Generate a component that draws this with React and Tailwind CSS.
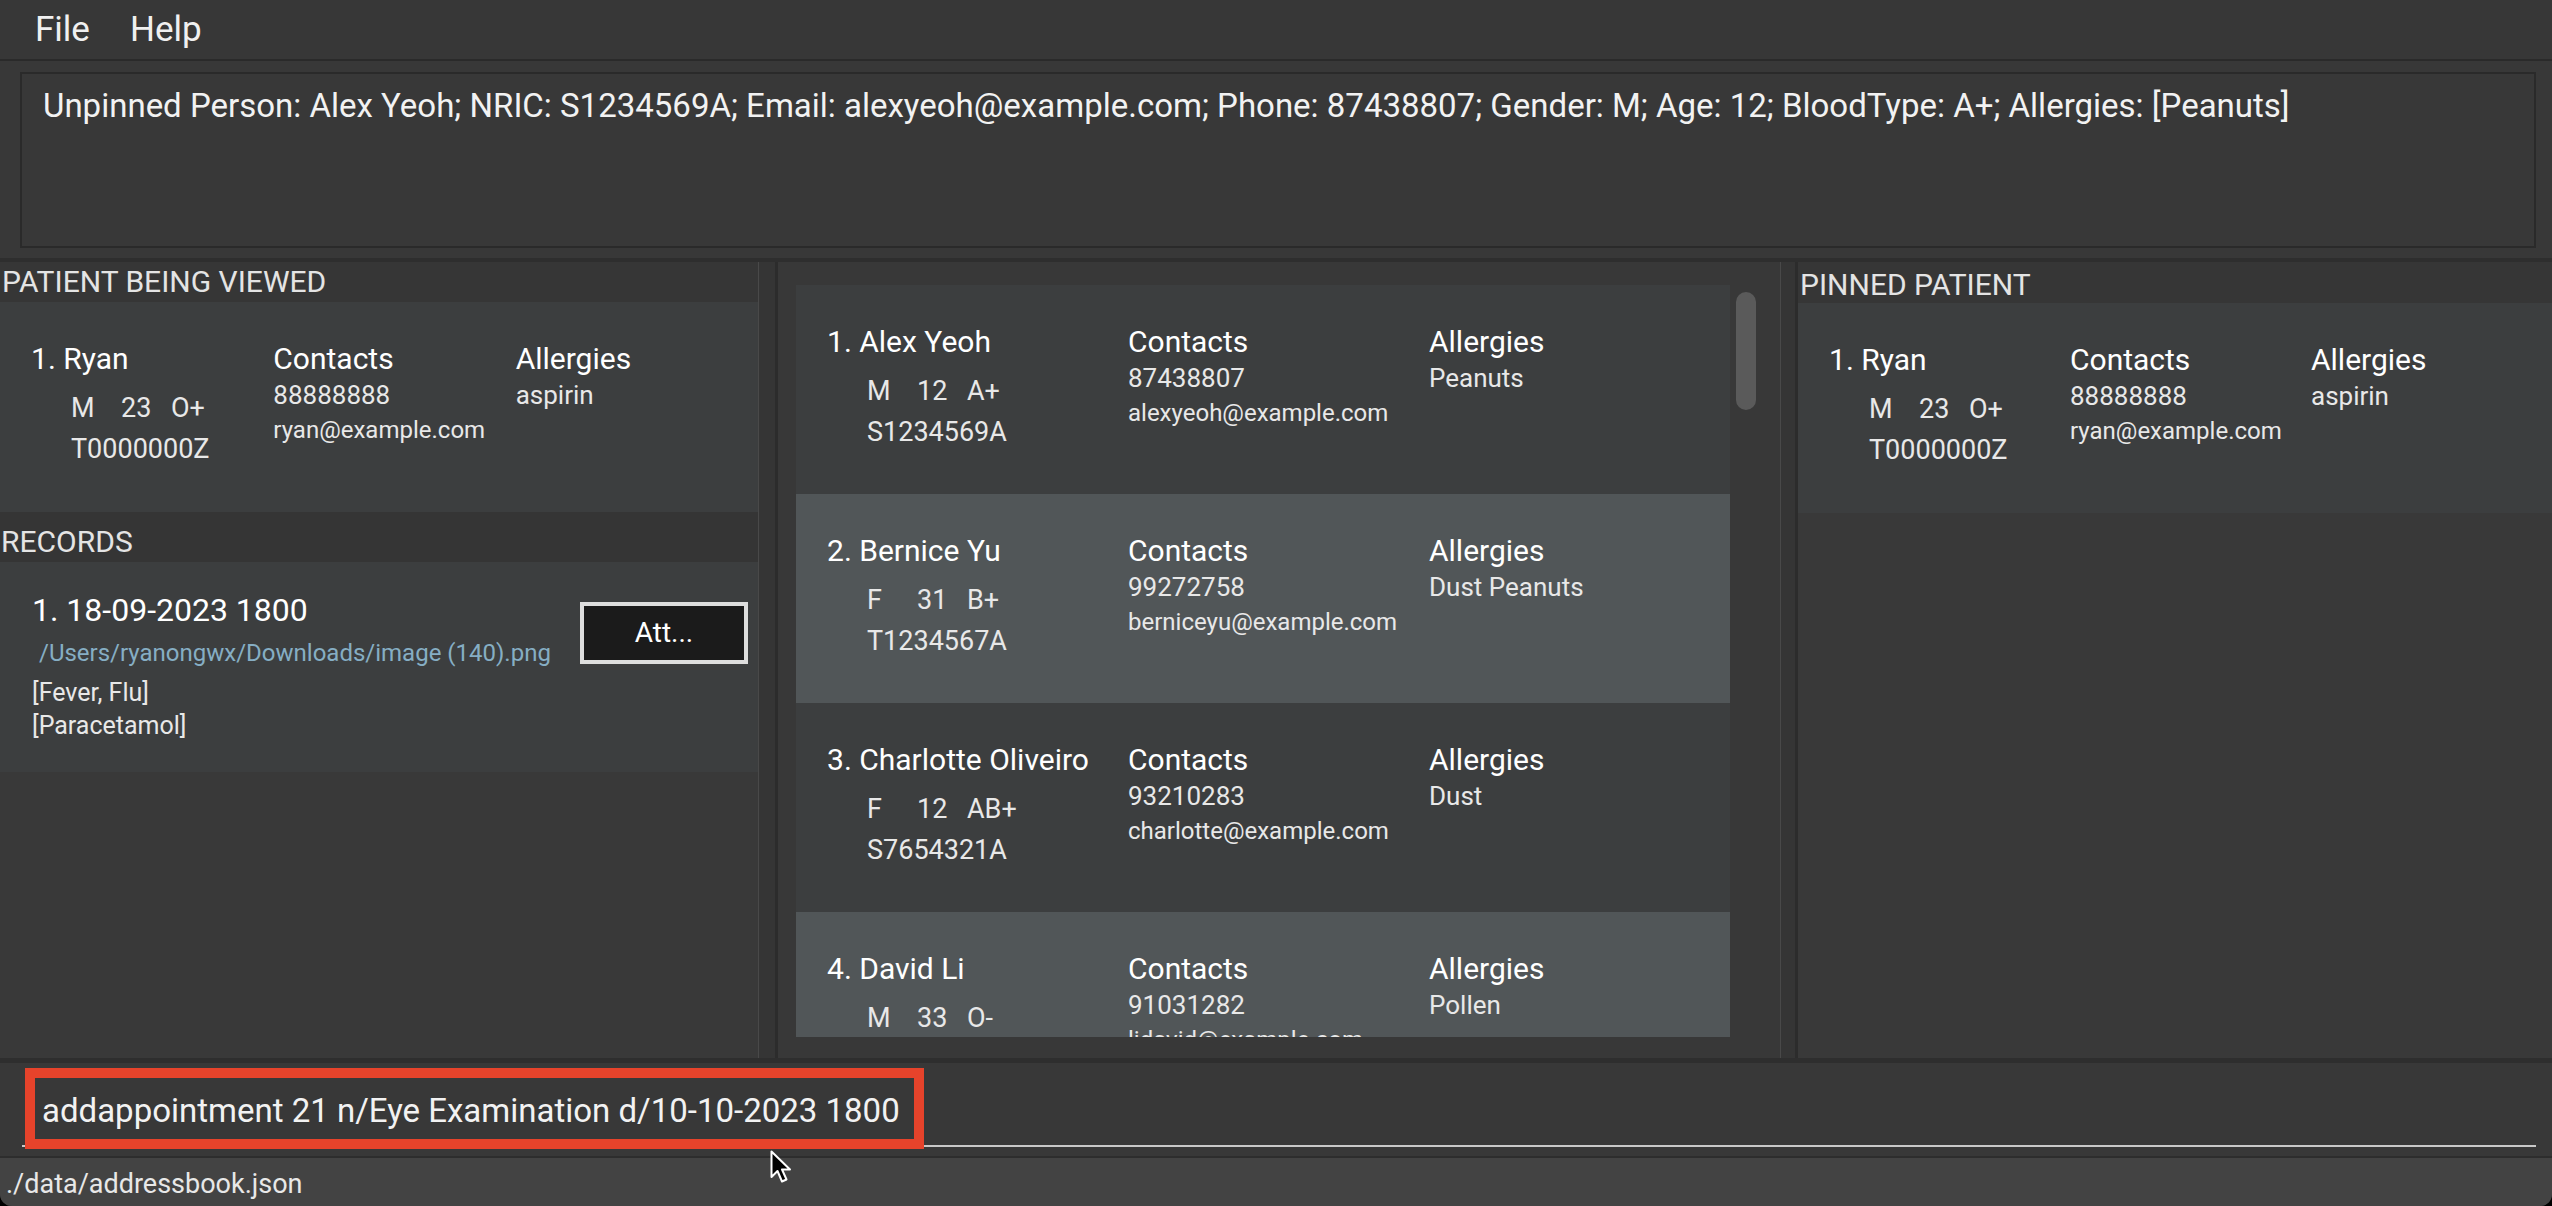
import React from 'react';

// patients shown in the middle list
const people = [
    { idx: 1, name: 'Alex Yeoh', gender: 'M', age: '12', blood: 'A+', nric: 'S1234569A', phone: '87438807', email: 'alexyeoh@example.com', allergies: 'Peanuts' },
    { idx: 2, name: 'Bernice Yu', gender: 'F', age: '31', blood: 'B+', nric: 'T1234567A', phone: '99272758', email: 'berniceyu@example.com', allergies: 'Dust Peanuts' },
    { idx: 3, name: 'Charlotte Oliveiro', gender: 'F', age: '12', blood: 'AB+', nric: 'S7654321A', phone: '93210283', email: 'charlotte@example.com', allergies: 'Dust' },
    { idx: 4, name: 'David Li', gender: 'M', age: '33', blood: 'O-', nric: 'G0000000A', phone: '91031282', email: 'lidavid@example.com', allergies: 'Pollen' },
];

const ryan = { idx: 1, name: 'Ryan', gender: 'M', age: '23', blood: 'O+', nric: 'T0000000Z', phone: '88888888', email: 'ryan@example.com', allergies: 'aspirin' };

const PersonCard = ({ p, className }) => (
    <div className={`grid grid-cols-3 pl-[31px] pt-[37px] shrink-0 ${className}`}>
        <div>
            <div className="text-[30px] leading-[40px] text-white whitespace-nowrap">{p.idx}. {p.name}</div>
            <div className="mt-[9px] pl-[40px] text-[27px] leading-[41px] text-[#e8e8e8]">
                <div className="flex">
                    <span className="w-[50px]">{p.gender}</span>
                    <span className="w-[50px]">{p.age}</span>
                    <span>{p.blood}</span>
                </div>
                <div>{p.nric}</div>
            </div>
        </div>
        <div>
            <div className="text-[30px] leading-[40px] text-white">Contacts</div>
            <div className="text-[26px] leading-[32px] text-[#e8e8e8]">{p.phone}</div>
            <div className="mt-[3px] text-[24px] leading-[32px] text-[#e8e8e8] whitespace-nowrap">{p.email}</div>
        </div>
        <div>
            <div className="text-[30px] leading-[40px] text-white">Allergies</div>
            <div className="text-[26px] leading-[32px] text-[#e8e8e8] whitespace-nowrap">{p.allergies}</div>
        </div>
    </div>
);

const Divider = () => (
    <div className="h-full bg-[#353535] border-l border-[#494949] border-r-[3px] border-r-[#2c2c2c]" />
);

const Cursor = () => (
    <svg width="24" height="36" viewBox="0 0 24 36" className="absolute left-[770px] top-[1150px]">
        <path d="M1.5 1.5 L1.5 27 L7.5 21 L12 31.5 L16.5 29.5 L12 19.5 L20 19.5 Z" fill="#000" stroke="#fff" strokeWidth="2" strokeLinejoin="round" />
    </svg>
);

const App = () => {
    return (
        <div className="relative w-[2552px] h-[1206px] bg-black overflow-hidden font-[Roboto,'Liberation_Sans',sans-serif]">
            <div className="h-full flex flex-col bg-[#383838] rounded-b-[12px] overflow-hidden">
                {/* menu bar */}
                <div className="h-[61px] shrink-0 flex pl-[35px] bg-[#373737] border-b-2 border-[#2a2a2a] text-[35px] leading-[59px] text-[#f0f0f0]">
                    <span className="w-[95px]">File</span>
                    <span>Help</span>
                </div>

                {/* result display */}
                <div className="h-[197px] shrink-0 pt-[11px] pb-[10px] pl-[20px] pr-[16px]">
                    <div className="h-full border-2 border-[#2a2a2a] bg-[#383838] pl-[21px] pt-[12px] text-[33px] leading-[40px] text-[#f2f2f2] whitespace-nowrap">
                        Unpinned Person: Alex Yeoh; NRIC: S1234569A; Email: alexyeoh@example.com; Phone: 87438807; Gender: M; Age: 12; BloodType: A+; Allergies: [Peanuts]
                    </div>
                </div>
                <div className="h-[4px] shrink-0 bg-[#2e2e2e]" />

                {/* three panes */}
                <div className="h-[796px] shrink-0 flex">
                    {/* left pane */}
                    <div className="w-[758px] shrink-0 flex flex-col bg-[#393939]">
                        <div className="h-[40px] pl-[2px] bg-[#363636] text-[30px] leading-[40px] text-[#e4e4e4]">PATIENT BEING VIEWED</div>
                        <PersonCard p={ryan} className="h-[210px] bg-[#3c3e3f]" />
                        <div className="h-[50px] pt-[10px] pl-[1px] bg-[#353535] text-[30px] leading-[40px] text-[#e4e4e4]">RECORDS</div>
                        <div className="h-[210px] flex bg-[#3c3e3f]">
                            <div className="flex-1 min-w-0 pl-[32px] pt-[26px]">
                                <div className="text-[32px] leading-[44px] text-white">1. 18-09-2023 1800</div>
                                <div className="mt-[4px] pl-[7px] text-[24px] leading-[34px] text-[#86aec4] whitespace-nowrap">/Users/ryanongwx/Downloads/image (140).png</div>
                                <div className="mt-[6px] text-[25px] leading-[33px] text-[#e8e8e8]">
                                    <div>[Fever, Flu]</div>
                                    <div>[Paracetamol]</div>
                                </div>
                            </div>
                            <div className="mt-[40px] mr-[10px] w-[168px] h-[62px] shrink-0 flex items-center justify-center border-[4px] border-[#dedede] bg-[#1b1b1b] text-[28px] text-white">
                                Att...
                            </div>
                        </div>
                    </div>

                    <div className="w-[20px] shrink-0"><Divider /></div>

                    {/* person list */}
                    <div className="w-[1002px] shrink-0 flex pl-[18px] pt-[23px] bg-[#383838]">
                        <div className="w-[934px] h-[752px] flex flex-col overflow-hidden">
                            {people.map((p, i) => (
                                <PersonCard key={p.idx} p={p} className={`h-[209px] ${i % 2 === 0 ? 'bg-[#3c3e3f]' : 'bg-[#515658]'}`} />
                            ))}
                        </div>
                        <div className="ml-[6px] w-[20px] pt-[7px]">
                            <div className="h-[118px] rounded-full bg-[#5a5a5a]" />
                        </div>
                    </div>

                    <div className="w-[18px] shrink-0"><Divider /></div>

                    {/* pinned */}
                    <div className="flex-1 flex flex-col bg-[#393939]">
                        <div className="h-[41px] pt-[3px] pl-[2px] bg-[#363636] text-[30px] leading-[40px] text-[#e4e4e4]">PINNED PATIENT</div>
                        <PersonCard p={ryan} className="h-[210px] bg-[#3c3e3f]" />
                    </div>
                </div>
                <div className="h-[5px] shrink-0 bg-[#2e2e2e]" />

                {/* command box */}
                <div className="h-[93px] shrink-0 pt-[28px] pb-[9px] pl-[22px] pr-[16px]">
                    <div className="pl-[20px] pb-[14px] border-b-2 border-[#c8c8c8] text-[33px] leading-[40px] text-[#f2f2f2] whitespace-nowrap">
                        addappointment 21 n/Eye Examination d/10-10-2023 1800
                    </div>
                </div>

                {/* status bar */}
                <div className="flex-1 border-t-2 border-[#2d2d2d] bg-[#434343] pl-[6px] pt-[5px] text-[27px] leading-[43px] text-[#e8e8e8]">
                    ./data/addressbook.json
                </div>
            </div>

            {/* annotation box over the command field */}
            <div className="absolute left-[25px] top-[1068px] w-[899px] h-[81px] border-[10px] border-[#e6432b]" />
            <Cursor />
        </div>
    );
};

export default App;
